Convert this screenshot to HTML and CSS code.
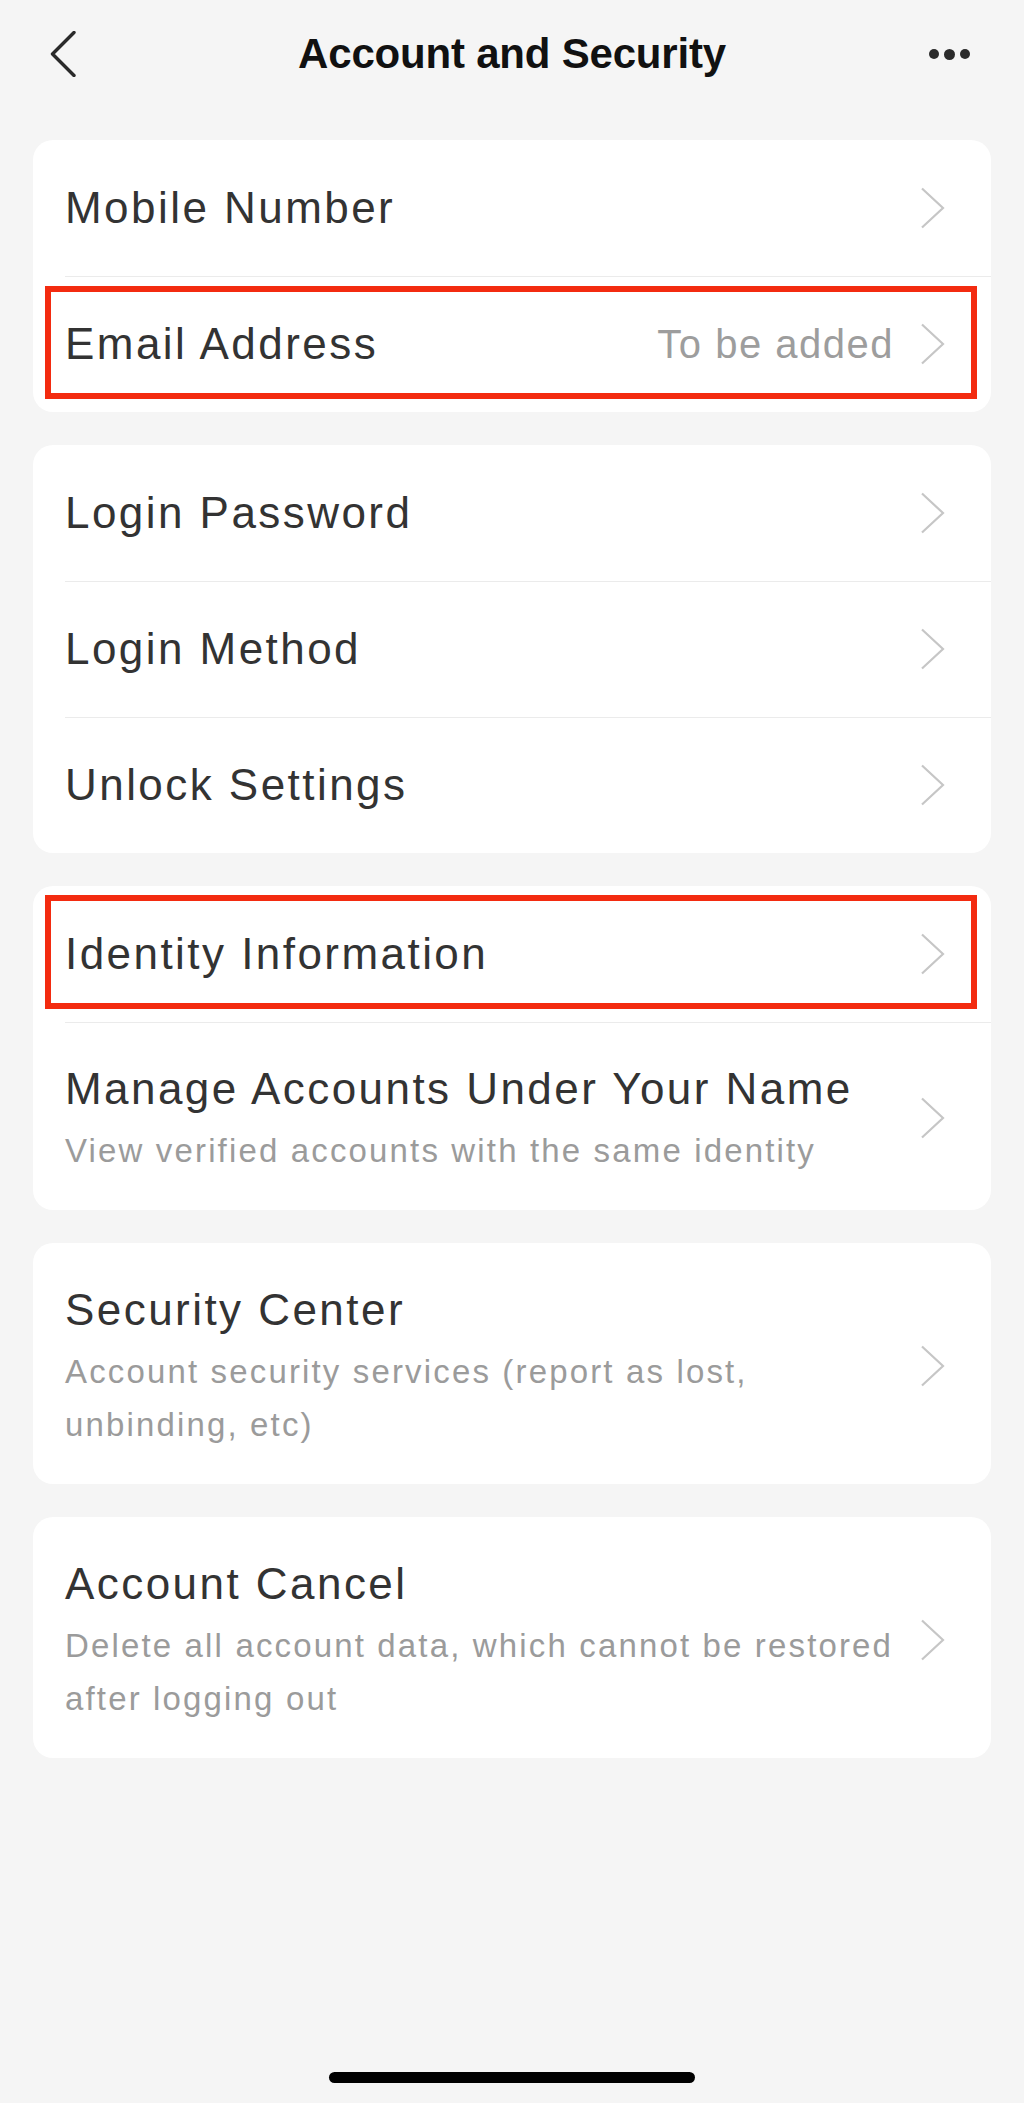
FILE: index.html
```html
<!DOCTYPE html>
<html lang="en">
<head>
<meta charset="utf-8">
<title>Account and Security</title>
<link rel="stylesheet" href="styles.css">
</head>
<body>
<div class="page">
  <header class="nav">
    <div class="nav-left">
      <svg class="back" width="28" height="46" viewBox="0 0 28 46" aria-hidden="true">
        <polyline points="25,1.5 3.5,23 25,44.5" fill="none" stroke="#2a2a2a" stroke-width="3.4" stroke-linecap="round" stroke-linejoin="round"/>
      </svg>
    </div>
    <h1 class="nav-title">Account and Security</h1>
    <div class="nav-right">
      <span class="dot"></span><span class="dot dot-mid"></span><span class="dot"></span>
    </div>
  </header>

  <main class="list">
    <section class="card">
      <div class="row">
        <div class="content"><div class="title">Mobile Number</div></div>
        <svg class="chev" width="26" height="42" viewBox="0 0 26 42" aria-hidden="true"><polyline points="2,1.5 23,21 2,40.5" fill="none" stroke="#c6c6c6" stroke-width="2.2"/></svg>
      </div>
      <div class="row">
        <div class="content"><div class="title">Email Address</div></div>
        <span class="value">To be added</span>
        <svg class="chev" width="26" height="42" viewBox="0 0 26 42" aria-hidden="true"><polyline points="2,1.5 23,21 2,40.5" fill="none" stroke="#c6c6c6" stroke-width="2.2"/></svg>
        <span class="mark"></span>
      </div>
    </section>

    <section class="card">
      <div class="row">
        <div class="content"><div class="title">Login Password</div></div>
        <svg class="chev" width="26" height="42" viewBox="0 0 26 42" aria-hidden="true"><polyline points="2,1.5 23,21 2,40.5" fill="none" stroke="#c6c6c6" stroke-width="2.2"/></svg>
      </div>
      <div class="row">
        <div class="content"><div class="title">Login Method</div></div>
        <svg class="chev" width="26" height="42" viewBox="0 0 26 42" aria-hidden="true"><polyline points="2,1.5 23,21 2,40.5" fill="none" stroke="#c6c6c6" stroke-width="2.2"/></svg>
      </div>
      <div class="row">
        <div class="content"><div class="title">Unlock Settings</div></div>
        <svg class="chev" width="26" height="42" viewBox="0 0 26 42" aria-hidden="true"><polyline points="2,1.5 23,21 2,40.5" fill="none" stroke="#c6c6c6" stroke-width="2.2"/></svg>
      </div>
    </section>

    <section class="card">
      <div class="row">
        <div class="content"><div class="title">Identity Information</div></div>
        <svg class="chev" width="26" height="42" viewBox="0 0 26 42" aria-hidden="true"><polyline points="2,1.5 23,21 2,40.5" fill="none" stroke="#c6c6c6" stroke-width="2.2"/></svg>
        <span class="mark"></span>
      </div>
      <div class="row row-multi">
        <div class="content">
          <div class="title">Manage Accounts Under Your Name</div>
          <div class="sub">View verified accounts with the same identity</div>
        </div>
        <svg class="chev" width="26" height="42" viewBox="0 0 26 42" aria-hidden="true"><polyline points="2,1.5 23,21 2,40.5" fill="none" stroke="#c6c6c6" stroke-width="2.2"/></svg>
      </div>
    </section>

    <section class="card">
      <div class="row row-multi">
        <div class="content">
          <div class="title">Security Center</div>
          <div class="sub">Account security services (report as lost, unbinding, etc)</div>
        </div>
        <svg class="chev" width="26" height="42" viewBox="0 0 26 42" aria-hidden="true"><polyline points="2,1.5 23,21 2,40.5" fill="none" stroke="#c6c6c6" stroke-width="2.2"/></svg>
      </div>
    </section>

    <section class="card">
      <div class="row row-multi">
        <div class="content">
          <div class="title">Account Cancel</div>
          <div class="sub">Delete all account data, which cannot be restored after logging out</div>
        </div>
        <svg class="chev" width="26" height="42" viewBox="0 0 26 42" aria-hidden="true"><polyline points="2,1.5 23,21 2,40.5" fill="none" stroke="#c6c6c6" stroke-width="2.2"/></svg>
      </div>
    </section>
  </main>

  <footer class="home">
    <span class="home-bar"></span>
  </footer>
</div>
</body>
</html>
```

FILE: styles.css
```css
* {
  box-sizing: border-box;
}

html, body {
  margin: 0;
  padding: 0;
  background: #f5f5f5;
}

body {
  font-family: "Liberation Sans", Arial, Helvetica, sans-serif;
  color: #333333;
}

.page {
  min-height: 2103px;
  display: flex;
  flex-direction: column;
}

/* Navigation bar */
.nav {
  height: 104px;
  display: grid;
  grid-template-columns: 1fr auto 1fr;
  align-items: center;
}

.nav-left {
  padding-left: 49px;
  display: flex;
  align-items: center;
}

.back {
  display: block;
  margin-top: 1px;
}

.nav-title {
  margin: 0;
  font-size: 42px;
  font-weight: 700;
  letter-spacing: -0.2px;
  color: #111111;
  line-height: 104px;
  padding-top: 2px;
}

.nav-right {
  display: flex;
  justify-content: flex-end;
  align-items: center;
  gap: 5px;
  padding-right: 54px;
  padding-top: 2px;
}

.dot {
  width: 10px;
  height: 10px;
  border-radius: 50%;
  background: #2b2b2b;
}

.dot-mid {
  width: 11px;
  height: 11px;
}

/* List */
.list {
  flex: 1;
  display: flex;
  flex-direction: column;
  gap: 33px;
  padding: 36px 33px 0;
}

.card {
  background: #ffffff;
  border-radius: 20px;
}

.row {
  position: relative;
  display: flex;
  align-items: center;
  margin-left: 32px;
  padding: 38px 45px 38px 0;
}

.row + .row {
  border-top: 1.5px solid #ebebeb;
  padding-top: 37px;
}

.row-multi {
  padding-top: 37px;
  padding-bottom: 33px;
}

.row + .row-multi {
  padding-top: 36px;
}

.content {
  flex: 1;
  min-width: 0;
  padding-right: 20px;
}

.title {
  font-size: 44px;
  line-height: 60px;
  letter-spacing: 2.45px;
  color: #333333;
  white-space: nowrap;
}

.sub {
  margin-top: 5px;
  font-size: 33px;
  line-height: 53px;
  letter-spacing: 2.15px;
  color: #9b9b9b;
}

.value {
  font-size: 40px;
  line-height: 60px;
  letter-spacing: 1.5px;
  color: #9d9d9d;
  margin-right: 26px;
}

.chev {
  display: block;
  flex: none;
}

/* Red annotation frame */
.mark {
  position: absolute;
  top: 9px;
  bottom: 13px;
  left: -20px;
  right: 14px;
  border: 6px solid #f32b10;
  pointer-events: none;
}

/* Home indicator */
.home {
  display: flex;
  justify-content: center;
  padding-bottom: 20px;
}

.home-bar {
  width: 366px;
  height: 11px;
  border-radius: 6px;
  background: #000000;
}
```
